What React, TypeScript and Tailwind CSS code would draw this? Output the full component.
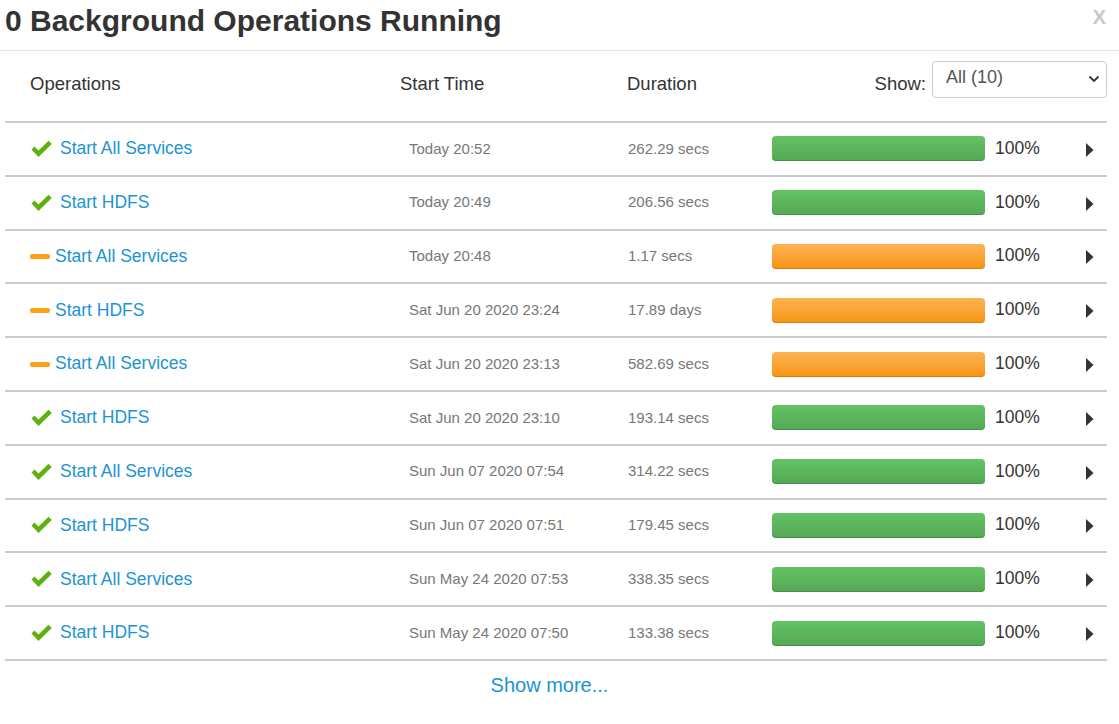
type Op = {
  name: string
  ok: boolean
  time: string
  duration: string
}

const ops: Op[] = [
  { name: "Start All Services", ok: true, time: "Today 20:52", duration: "262.29 secs" },
  { name: "Start HDFS", ok: true, time: "Today 20:49", duration: "206.56 secs" },
  { name: "Start All Services", ok: false, time: "Today 20:48", duration: "1.17 secs" },
  { name: "Start HDFS", ok: false, time: "Sat Jun 20 2020 23:24", duration: "17.89 days" },
  { name: "Start All Services", ok: false, time: "Sat Jun 20 2020 23:13", duration: "582.69 secs" },
  { name: "Start HDFS", ok: true, time: "Sat Jun 20 2020 23:10", duration: "193.14 secs" },
  { name: "Start All Services", ok: true, time: "Sun Jun 07 2020 07:54", duration: "314.22 secs" },
  { name: "Start HDFS", ok: true, time: "Sun Jun 07 2020 07:51", duration: "179.45 secs" },
  { name: "Start All Services", ok: true, time: "Sun May 24 2020 07:53", duration: "338.35 secs" },
  { name: "Start HDFS", ok: true, time: "Sun May 24 2020 07:50", duration: "133.38 secs" },
]

function Check() {
  return (
    <svg width="23" height="18" viewBox="0 0 23 18" className="mr-[7px] shrink-0">
      <path d="M1.5 9.5 L4.5 6.5 L8.5 10.5 L18.5 0.8 L21.8 4 L8.5 17 Z" fill="#5fb20e" />
    </svg>
  )
}

function Minus() {
  return <span className="mr-[5px] inline-block h-[5px] w-[20px] shrink-0 rounded-[2px] bg-[#ff9f16]" />
}

function Caret() {
  return (
    <svg width="9" height="14" viewBox="0 0 9 14">
      <path d="M1 0 L8.5 7 L1 14 Z" fill="#333" />
    </svg>
  )
}

export default function App() {
  return (
    <div className="h-[724px] w-[1119px] bg-white font-['Liberation_Sans',Arial,sans-serif] text-[#333]">
      {/* modal header */}
      <div className="flex h-[51px] items-start justify-between border-b border-[#e5e5e5] pl-[5px] pr-[13px]">
        <h1 className="mt-[2px] text-[30px] font-bold leading-[38px] text-[#333]">0 Background Operations Running</h1>
        <span className="mt-[5px] text-[20px] font-bold leading-[24px] text-[#c8c8c8]">X</span>
      </div>

      <div className="mx-[5px] w-[1102px]">
        {/* table header */}
        <div className="flex h-[70px] items-center text-[18.5px] text-[#333]">
          <div className="w-[387px] pl-[25px] -mt-[4px]">Operations</div>
          <div className="w-[227px] pl-[8px] -mt-[4px]">Start Time</div>
          <div className="w-[200px] pl-[8px] -mt-[4px]">Duration</div>
          <div className="flex flex-1 items-center justify-end pb-[14px]">
            <span className="mr-[6px] mt-[10px]">Show:</span>
            <div className="flex h-[37px] w-[175px] items-center justify-between rounded-[4px] border border-[#ccc] pl-[13px] pr-[6px] text-[18px] text-[#555]">
              <span className="-mt-[4px]">All (10)</span>
              <svg width="12" height="8" viewBox="0 0 12 8">
                <path d="M1.5 1.5 L6 6 L10.5 1.5" fill="none" stroke="#333" strokeWidth="1.8" />
              </svg>
            </div>
          </div>
        </div>

        {/* rows */}
        {ops.map((op, i) => (
          <div key={i} className="flex h-[53.8px] items-center border-t-2 border-[#cbcbcb]">
            <div className="flex w-[387px] items-center pl-[25px] text-[17.5px] text-[#1b94d1]">
              {op.ok ? <Check /> : <Minus />}
              <span className="-mt-[1px]">{op.name}</span>
            </div>
            <div className="w-[227px] pl-[17px] text-[15px] text-[#777]">{op.time}</div>
            <div className="w-[153px] pl-[9px] text-[15px] text-[#777]">{op.duration}</div>
            <div className="flex flex-1 items-center">
              <div
                className={
                  op.ok
                    ? "h-[25px] w-[213px] rounded-[4px] bg-gradient-to-b from-[#63c363] to-[#55a855] shadow-[inset_0_-1px_0_rgba(0,0,0,0.15)]"
                    : "h-[25px] w-[213px] rounded-[4px] bg-gradient-to-b from-[#fbb450] to-[#f89406] shadow-[inset_0_-1px_0_rgba(0,0,0,0.15)]"
                }
              />
              <span className="ml-[10px] -mt-[2px] text-[17.5px] text-[#333]">100%</span>
              <span className="ml-auto mr-[13px] mt-[2px] flex">
                <Caret />
              </span>
            </div>
          </div>
        ))}
        <div className="border-t-2 border-[#cbcbcb]" />
        <div className="pr-[13px] pt-[9px] text-center text-[20px] text-[#1b94d1]">Show more...</div>
      </div>
    </div>
  )
}
